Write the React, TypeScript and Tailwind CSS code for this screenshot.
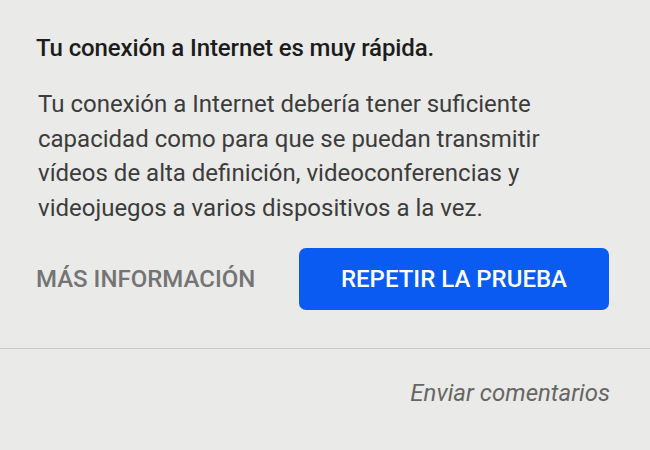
import React from 'react';

const App: React.FC = () => {
  return (
    <div className="w-[650px] h-[450px] overflow-hidden bg-[#eaeae8] font-['Roboto',sans-serif]">
      <div className="pl-[36px] pr-[41px] pt-[33px]">
        <h1 className="text-[24px] leading-[30px] font-medium text-[#1c1c1c] tracking-[-0.1px]">
          Tu conexión a Internet es muy rápida.
        </h1>
        <p className="mt-[24px] w-[540px] text-[24px] leading-[34.5px] text-[#3c3c3c] pl-[2px]">
          Tu conexión a Internet debería tener suficiente capacidad como para que se puedan transmitir vídeos de alta definición, videoconferencias y videojuegos a varios dispositivos a la vez.
        </p>
        <div className="mt-[23px] flex items-center justify-between">
          <button className="text-[24px] font-medium text-[#747474]">
            MÁS INFORMACIÓN
          </button>
          <button className="w-[310px] h-[62px] rounded-[7px] bg-[#0a5bf2] text-white text-[24px] font-medium">
            REPETIR LA PRUEBA
          </button>
        </div>
      </div>
      <div className="mt-[38px] border-t border-[#c9c9c7]" />
      <div className="pr-[40px] pt-[26px] flex justify-end">
        <span className="text-[24px] italic text-[#666664]">Enviar comentarios</span>
      </div>
    </div>
  );
};

export default App;
